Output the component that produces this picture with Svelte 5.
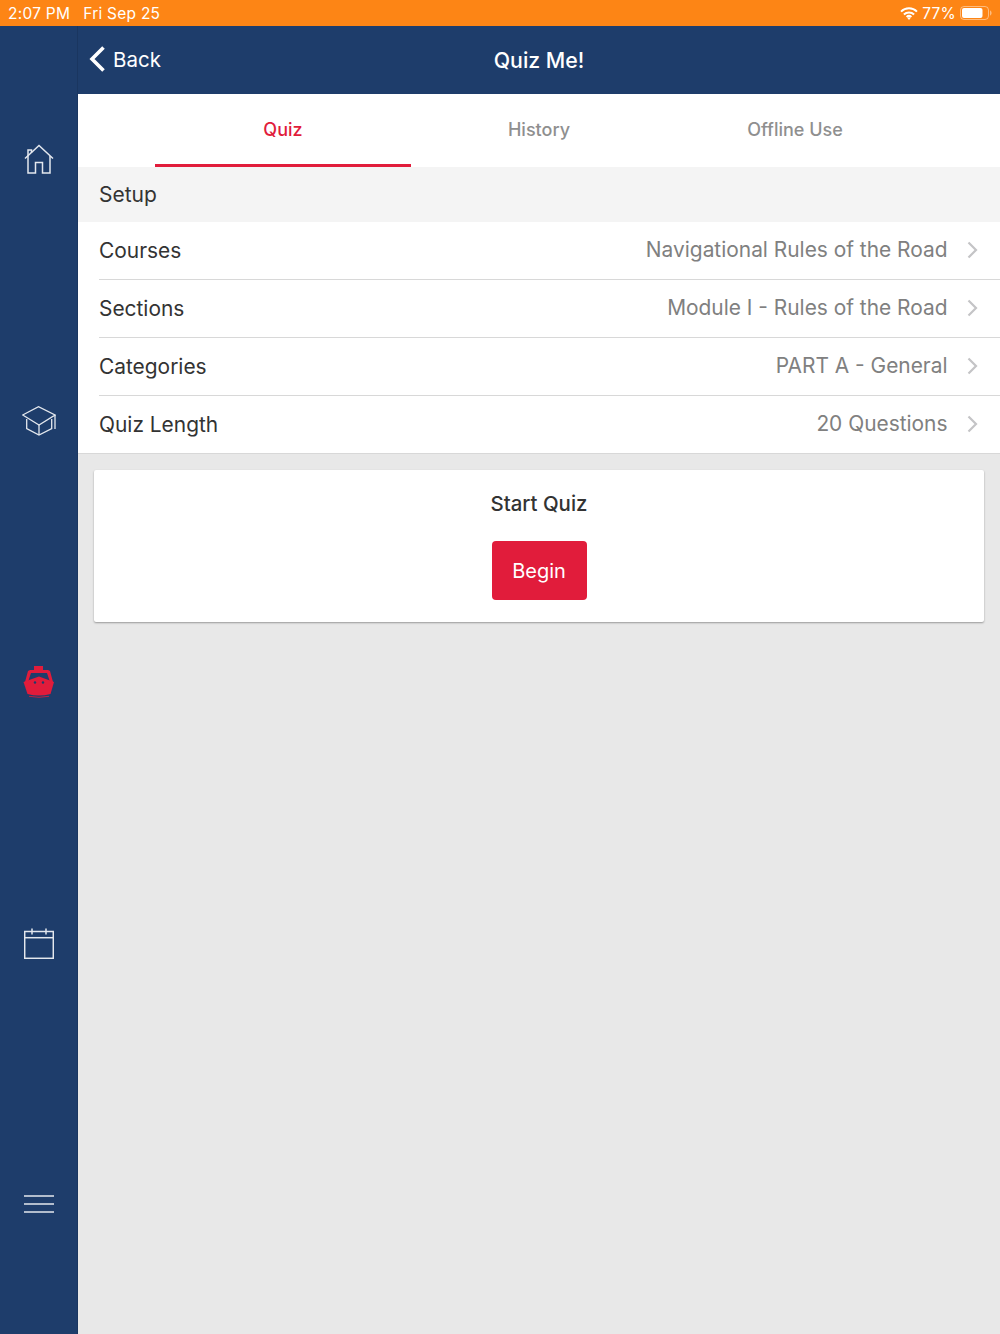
<script>
	const tabs = ['Quiz', 'History', 'Offline Use'];
	const rows = [
		{ label: 'Courses', value: 'Navigational Rules of the Road' },
		{ label: 'Sections', value: 'Module I - Rules of the Road' },
		{ label: 'Categories', value: 'PART A - General' },
		{ label: 'Quiz Length', value: '20 Questions' }
	];
</script>

<div class="screen">
	<div class="status">
		<div class="status-left">
			<span>2:07 PM</span>
			<span>Fri Sep 25</span>
		</div>
		<div class="status-right">
			<svg width="18" height="13" viewBox="0 0 18 13" fill="none" stroke="#fff" stroke-width="2">
				<path d="M1 4.6a11.4 11.4 0 0 1 16 0" />
				<path d="M3.9 7.5a7.3 7.3 0 0 1 10.2 0" />
				<path d="M6.6 10a3.5 3.5 0 0 1 4.8 0" />
				<path d="M9 13l-1.6-2a2.4 2.4 0 0 1 3.2 0z" fill="#fff" stroke="none" />
			</svg>
			<span>77%</span>
			<svg width="32" height="14" viewBox="0 0 32 14">
				<rect x="0.5" y="0.5" width="28" height="13" rx="3.5" fill="none" stroke="#fff" stroke-opacity="0.45" />
				<rect x="2" y="2" width="20.5" height="10" rx="2" fill="#fff" />
				<path d="M30 4.5c1 .3 1.6 1.3 1.6 2.5s-.6 2.2-1.6 2.5z" fill="#fff" fill-opacity="0.45" />
			</svg>
		</div>
	</div>

	<div class="body">
		<nav class="sidebar">
			<div class="nav-cell">
				<svg class="home" width="30" height="30" viewBox="0 0 30 30" fill="none" stroke="#e4e8ee" stroke-width="1.5">
					<path d="M1 14.5L15 1.5l14 13" />
					<path d="M4 12V6h3.5v2.8" />
					<path d="M4 12v17h7.5V18.5h7V29H26V12" />
				</svg>
			</div>
			<div class="nav-cell">
				<svg width="34" height="30" viewBox="0 0 34 30" fill="none" stroke="#e4e8ee" stroke-width="1.3">
					<path d="M0.7 9L16.5 0.7 33 9 17 19z" />
					<path d="M4.7 13v9.5L17 29l12.7-6.5V13" />
					<path d="M17 19v10" />
					<path d="M33 9v14" />
				</svg>
			</div>
			<div class="nav-cell">
				<svg width="32" height="33" viewBox="0 0 32 33">
					<path d="M11 1h9v4h5l2 1 3 11h-3l-3-9H8l-3 9H2L5 6l2-1h4z" fill="#e11c3b" />
					<path d="M0.5 17L16 11.5 31 17l-3.5 12Q16 32 4.5 29z" fill="#e11c3b" />
					<circle cx="12" cy="17.5" r="1.2" fill="#1e3d6b" />
					<circle cx="20" cy="17.5" r="1.2" fill="#1e3d6b" />
					<path d="M6 31.3q10 2 20 0" fill="none" stroke="#e11c3b" stroke-width="0.8" />
				</svg>
			</div>
			<div class="nav-cell">
				<svg class="cal" width="30" height="31" viewBox="0 0 30 31" fill="none" stroke="#e4e8ee" stroke-width="1.5">
					<rect x="0.7" y="3.5" width="28.6" height="26.8" />
					<path d="M0.7 9.7h28.6" />
					<path d="M8 0.5v6M22 0.5v6" />
				</svg>
			</div>
			<div class="nav-cell">
				<svg width="30" height="18" viewBox="0 0 30 18" fill="none" stroke="#e4e8ee" stroke-width="1.5">
					<path d="M0 1h30M0 9h30M0 17h30" />
				</svg>
			</div>
		</nav>

		<main class="main">
			<header class="topbar">
				<div class="back">
					<svg width="18" height="28" viewBox="0 0 18 28" fill="none" stroke="#fff" stroke-width="3.6">
						<path d="M15.5 2.5L4 14l11.5 11.5" />
					</svg>
					<span>Back</span>
				</div>
				<h1>Quiz Me!</h1>
			</header>

			<div class="tabs">
				{#each tabs as tab, i}
					<div class="tab" class:active={i === 0}>{tab}</div>
				{/each}
			</div>

			<div class="section-head">Setup</div>

			<div class="rows">
				{#each rows as row}
					<div class="row">
						<div class="row-inner">
							<span class="row-label">{row.label}</span>
							<span class="row-value">{row.value}</span>
							<svg class="chev" width="11" height="18" viewBox="0 0 11 18" fill="none" stroke="#c4c4c6" stroke-width="2.2">
								<path d="M1.5 1.5L9 9l-7.5 7.5" />
							</svg>
						</div>
					</div>
				{/each}
			</div>

			<div class="content">
				<section class="card">
					<h2>Start Quiz</h2>
					<button class="begin" type="button">Begin</button>
				</section>
			</div>
		</main>
	</div>
</div>

<style>
	:global(body) {
		margin: 0;
		background: #e8e8e8;
	}

	.screen {
		width: 1000px;
		height: 1334px;
		display: flex;
		flex-direction: column;
		font-family: Inter, 'Liberation Sans', sans-serif;
		overflow: hidden;
	}

	.status {
		height: 26px;
		flex: none;
		background: #fd8515;
		color: #fff;
		font-size: 15.5px;
		letter-spacing: 0.25px;
		display: flex;
		align-items: center;
		justify-content: space-between;
		padding: 0 8px;
		box-sizing: border-box;
	}

	.status-left {
		display: flex;
		gap: 13px;
	}

	.status-right {
		display: flex;
		align-items: center;
		gap: 4px;
	}

	.body {
		flex: 1;
		display: flex;
		min-height: 0;
	}

	.sidebar {
		width: 78px;
		box-sizing: border-box;
		flex: none;
		background: #1e3d6b;
		border-right: 1px solid #1a3660;
		display: flex;
		flex-direction: column;
		padding-top: 4px;
	}

	.nav-cell {
		flex: 1;
		display: flex;
		align-items: center;
		justify-content: center;
	}

	.home {
		margin-bottom: 2px;
	}

	.cal {
		margin-top: 2px;
	}

	.main {
		flex: 1;
		display: flex;
		flex-direction: column;
		background: #e8e8e8;
		min-width: 0;
	}

	.topbar {
		height: 68px;
		flex: none;
		background: #1e3d6b;
		display: flex;
		align-items: center;
		justify-content: center;
		position: relative;
		color: #fff;
	}

	.topbar h1 {
		margin: 0;
		font-size: 21.3px;
		font-weight: 500;
	}

	.back {
		position: absolute;
		left: 10px;
		top: 19px;
		display: flex;
		align-items: center;
		gap: 7px;
		font-size: 20.5px;
	}

	.tabs {
		height: 73px;
		flex: none;
		background: #fff;
		display: flex;
		justify-content: center;
	}

	.tab {
		width: 256px;
		display: flex;
		align-items: center;
		justify-content: center;
		box-sizing: border-box;
		font-size: 18px;
		font-weight: 500;
		color: #8f8f8f;
		border-bottom: 3px solid transparent;
	}

	.tab.active {
		color: #e11c3b;
		border-bottom-color: #e11c3b;
	}

	.section-head {
		height: 55px;
		flex: none;
		background: #f4f4f4;
		color: #333;
		font-size: 21px;
		display: flex;
		align-items: center;
		padding-left: 21px;
	}

	.rows {
		background: #fff;
		border-bottom: 1px solid #d8d8d8;
		flex: none;
	}

	.row {
		height: 58px;
		padding-left: 21px;
	}

	.row:last-child {
		height: 57px;
	}

	.row-inner {
		height: 100%;
		box-sizing: border-box;
		display: flex;
		align-items: center;
		padding-right: 22px;
		border-bottom: 1px solid #d8d8d8;
		font-size: 20.9px;
	}

	.row:last-child .row-inner {
		border-bottom: none;
	}

	.row-label {
		flex: 1;
		color: #333;
	}

	.row-value {
		color: #808080;
		margin-bottom: 2px;
	}

	.chev {
		margin-left: 19.5px;
		margin-bottom: 2px;
	}

	.content {
		padding: 16px 16px 0;
	}

	.card {
		height: 152px;
		background: #fff;
		border-radius: 2px;
		box-shadow: 0 1px 2px rgba(0, 0, 0, 0.35);
		display: flex;
		flex-direction: column;
		align-items: center;
	}

	.card h2 {
		margin: 21px 0 0;
		font-size: 20.4px;
		line-height: 26px;
		font-weight: 500;
		color: #333;
	}

	.begin {
		margin-top: 24px;
		width: 95px;
		height: 59px;
		border: none;
		border-radius: 4px;
		background: #e11c3b;
		color: #fff;
		font: inherit;
		font-size: 20px;
	}
</style>
